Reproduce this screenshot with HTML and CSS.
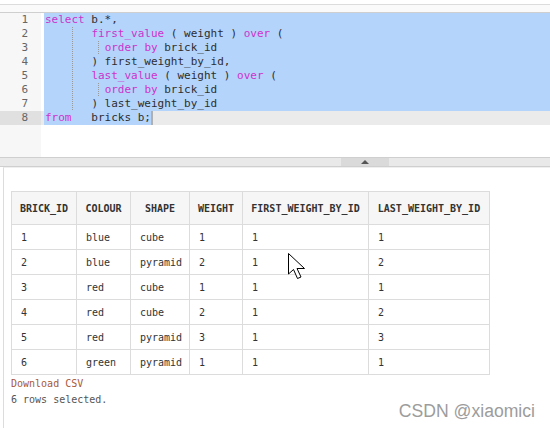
FILE: index.html
```html
<!DOCTYPE html>
<html>
<head>
<meta charset="utf-8">
<link rel="stylesheet" href="styles.css">
</head>
<body>
<div class="top"></div>
<div class="editor">
  <div class="gutter">
    <div class="ln">1</div>
    <div class="ln">2</div>
    <div class="ln">3</div>
    <div class="ln">4</div>
    <div class="ln">5</div>
    <div class="ln">6</div>
    <div class="ln">7</div>
    <div class="ln ln-active">8</div>
  </div>
  <div class="code">
    <div class="line sel"><span class="kw">select</span> b.*,</div>
    <div class="line sel">    <span class="g">   </span><span class="kw">first_value</span> ( weight ) <span class="kw">over</span> (</div>
    <div class="line sel">    <span class="g">    </span><span class="g"> </span><span class="kw">order</span> <span class="kw">by</span> brick_id</div>
    <div class="line sel">    <span class="g">   </span>) first_weight_by_id,</div>
    <div class="line sel">    <span class="g">   </span><span class="kw">last_value</span> ( weight ) <span class="kw">over</span> (</div>
    <div class="line sel">    <span class="g">    </span><span class="g"> </span><span class="kw">order</span> <span class="kw">by</span> brick_id</div>
    <div class="line sel">    <span class="g">   </span>) last_weight_by_id</div>
    <div class="line active"><span class="selpart"><span class="kw">from</span>   bricks b;</span><span class="caret"></span></div>
  </div>
</div>
<div class="splitter"><div class="handle"><span class="tri"></span></div></div>
<div class="results">
  <table class="grid">
    <colgroup>
      <col class="c1"><col class="c2"><col class="c3"><col class="c4"><col class="c5"><col class="c6">
    </colgroup>
    <thead>
      <tr><th>BRICK_ID</th><th>COLOUR</th><th>SHAPE</th><th>WEIGHT</th><th>FIRST_WEIGHT_BY_ID</th><th>LAST_WEIGHT_BY_ID</th></tr>
    </thead>
    <tbody>
      <tr><td>1</td><td>blue</td><td>cube</td><td>1</td><td>1</td><td>1</td></tr>
      <tr><td>2</td><td>blue</td><td>pyramid</td><td>2</td><td>1</td><td>2</td></tr>
      <tr><td>3</td><td>red</td><td>cube</td><td>1</td><td>1</td><td>1</td></tr>
      <tr><td>4</td><td>red</td><td>cube</td><td>2</td><td>1</td><td>2</td></tr>
      <tr><td>5</td><td>red</td><td>pyramid</td><td>3</td><td>1</td><td>3</td></tr>
      <tr><td>6</td><td>green</td><td>pyramid</td><td>1</td><td>1</td><td>1</td></tr>
    </tbody>
  </table>
  <div class="csv">Download CSV</div>
  <div class="count">6 rows selected.</div>
</div>
<svg class="pointer" width="22" height="30" viewBox="0 0 22 30">
  <path d="M1.5 1.5 L1.5 22 L6.5 17.5 L10.5 26.5 L14 25 L10 16.5 L17.5 16.5 Z" fill="#fff" stroke="#000" stroke-width="1" stroke-linejoin="miter"/>
</svg>
<div class="watermark">CSDN @xiaomici</div>
</body>
</html>
```

FILE: styles.css
```css
html, body {
  margin: 0;
  padding: 0;
  background: #fff;
}
body {
  width: 550px;
  height: 428px;
  overflow: hidden;
  position: relative;
  font-family: "DejaVu Sans Mono", "Liberation Mono", monospace;
}
.top {
  height: 7px;
  margin-top: 4px;
  border-top: 1px solid #dcdcdc;
  border-bottom: 1px solid #cfcfcf;
  background: #fafafa;
}
.editor {
  display: flex;
  height: 145px;
  border-bottom: 1px solid #cfcfcf;
  box-sizing: border-box;
}
.gutter {
  width: 41px;
  flex: none;
  background: #f7f7f7;
}
.ln {
  height: 14px;
  line-height: 14px;
  font-size: 11px;
  color: #666;
  text-align: right;
  padding-right: 13px;
}
.ln-active {
  background: #e0e0e0;
}
.code {
  flex: 1;
  padding-left: 3px;
  background: #fff;
}
.line {
  height: 14px;
  line-height: 14px;
  font-size: 11px;
  white-space: pre;
  color: #2e2e2e;
  padding-left: 1px;
}
.sel {
  background: #b4d4fc;
}
.active {
  background: #ebebeb;
  margin-left: -3px;
  padding-left: 4px;
  display: flex;
}
.selpart {
  background: #b4d4fc;
  white-space: pre;
  margin-left: -1px;
  padding-left: 1px;
}
.caret {
  width: 2px;
  height: 14px;
  background: #b0b0b0;
}
.kw {
  color: #cc33cc;
}
.g {
  background-image: linear-gradient(to bottom, #9a9a9a 50%, transparent 50%);
  background-size: 1px 2px;
  background-repeat: repeat-y;
  background-position: left top;
}
.splitter {
  height: 8px;
  background: #e9e9e9;
  border-bottom: 1px solid #cfcfcf;
  position: relative;
}
.handle {
  position: absolute;
  left: 341px;
  width: 48px;
  top: 0;
  height: 8px;
  background: #dadada;
  display: flex;
  justify-content: center;
  align-items: center;
}
.tri {
  width: 0;
  height: 0;
  border-left: 4px solid transparent;
  border-right: 4px solid transparent;
  border-bottom: 4px solid #555;
}
.results {
  margin-left: 3px;
  border-left: 1px solid #dcdcdc;
  border-top: 1px solid #efefef;
  padding: 23px 0 0 7px;
  height: 237px;
}
.grid {
  border-collapse: collapse;
  font-size: 10px;
  color: #333;
  table-layout: fixed;
  width: 478px;
}
.c1 { width: 65px; }
.c2 { width: 54px; }
.c3 { width: 59px; }
.c4 { width: 53px; }
.c5 { width: 126px; }
.c6 { width: 121px; }
.grid th, .grid td {
  border: 1px solid #dcdcdc;
  padding: 0 0 0 9px;
  text-align: left;
  white-space: nowrap;
}
.grid th {
  height: 32px;
  background: #f6f6f6;
  font-weight: bold;
  text-align: center;
  padding: 0;
}
.grid td {
  height: 24px;
}
.csv {
  font-size: 10px;
  line-height: 14px;
  margin-top: 2px;
  color: #a8583a;
}
.count {
  font-size: 10px;
  line-height: 14px;
  margin-top: 2px;
  color: #555;
}
.pointer {
  position: absolute;
  left: 287px;
  top: 252px;
}
.watermark {
  position: absolute;
  right: 15px;
  top: 401px;
  font-family: "Liberation Sans", Arial, sans-serif;
  font-size: 17.6px;
  color: #9c9c9c;
}
```
